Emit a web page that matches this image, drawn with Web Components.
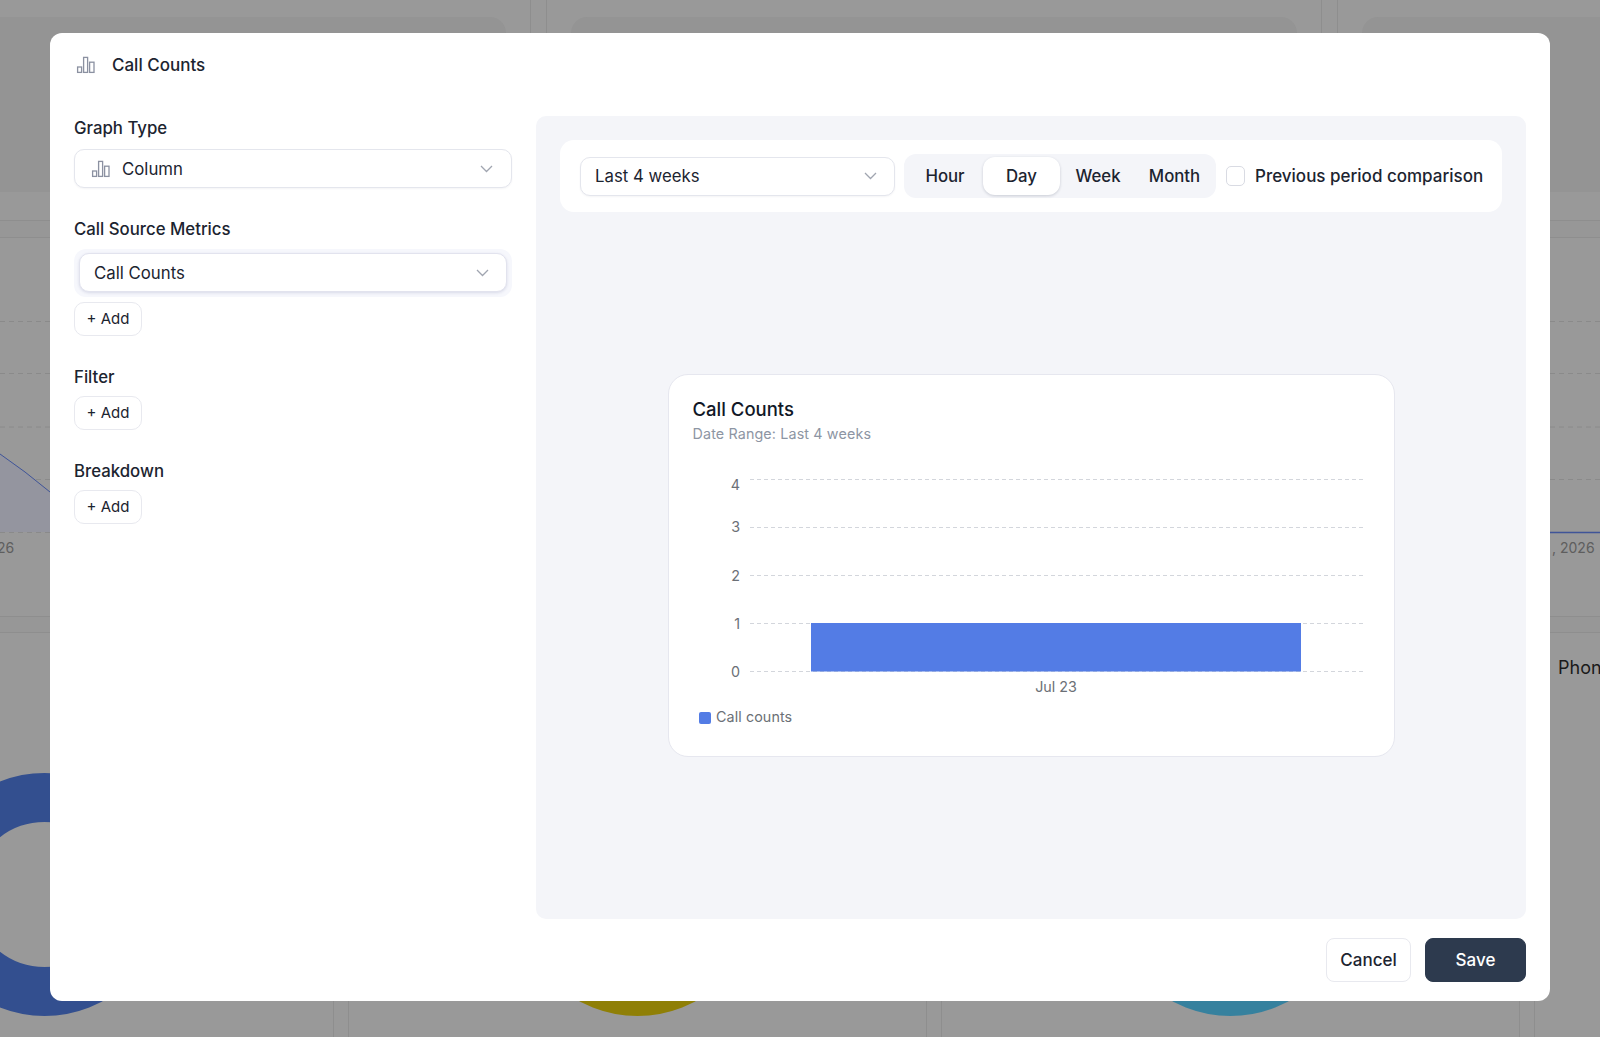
<!DOCTYPE html>
<html lang="en">
<head>
<meta charset="utf-8">
<title>Call Counts</title>
<style>
  html,body{margin:0;padding:0;height:100%;overflow:hidden;background:#999;font-family:Inter,"Liberation Sans",sans-serif;color:#1c2430}
  body{position:relative;width:1600px;height:1037px}
</style>
</head>
<body>
<bg-page></bg-page>
<app-modal>
  <span slot="title">Call Counts</span>
  <bar-icon slot="title-icon"></bar-icon>
  <config-panel slot="side"></config-panel>
  <preview-panel slot="main"></preview-panel>
  <action-button slot="footer">Cancel</action-button>
  <action-button slot="footer" primary>Save</action-button>
</app-modal>

<script>
function def(name, css, html, extra){
  const t=document.createElement('template');
  t.innerHTML='<style>'+css+'</style>'+html;
  customElements.define(name,class extends HTMLElement{
    constructor(){super();this.attachShadow({mode:'open'}).appendChild(t.content.cloneNode(true));if(extra)extra.call(this)}
  });
}

def('bar-icon',`:host{display:inline-flex;width:20px;height:20px;flex:none}svg{display:block}`,
`<svg width="20" height="20" viewBox="0 0 20 20" fill="none" stroke="#8b91a1" stroke-width="1.3"><rect x="1.6" y="12" width="4" height="5.4"/><rect x="7.6" y="2.4" width="4" height="15"/><rect x="13.6" y="7.2" width="4.4" height="10.2"/></svg>`);

def('chev-icon',`:host{display:inline-flex;flex:none}svg{display:block}`,
`<svg width="13" height="8" viewBox="0 0 13 8" fill="none" stroke="#a0a5b0" stroke-width="1.3"><path d="M1 1l5.5 5.5L12 1"/></svg>`);

def('x-select',`
  :host{display:flex;align-items:center;box-sizing:border-box;height:var(--h,39px);padding:0 var(--pr,18px) 0 var(--pl,16px);background:#fff;border:1px solid #e4e6ed;border-radius:10px;box-shadow:0 1px 2px rgba(30,40,70,.05);font:400 16.8px/24px Inter,sans-serif;color:#1c2430}
  .v{flex:1;display:flex;align-items:center;gap:var(--ig,11px)}
`,`<div class="v"><slot name="icon"></slot><slot></slot></div><chev-icon></chev-icon>`);

def('add-button',`
  :host{display:inline-flex;align-self:flex-start;align-items:center;justify-content:center;box-sizing:border-box;width:68px;height:34px;background:#fff;border:1px solid #e8e9ef;border-radius:10px;font:400 15px/20px Inter,sans-serif;color:#1c2430}
`,`+ Add`);

def('field-label',`:host{display:block;font:500 16.8px/24px Inter,sans-serif;color:#1c2430}`,`<slot></slot>`);

def('config-panel',`
  :host{display:flex;flex-direction:column}
  x-select.g{margin-top:9px}
  .ring{margin-top:8px;height:48px;box-sizing:border-box;padding:4px 5px 5px;background:#f6f7fc;border-radius:12px}
  .ring x-select{--h:39px;--pl:14px;--pr:17px;box-shadow:0 1px 3px rgba(40,50,110,.14);border-color:#e2e3ee}
  add-button{margin-top:5px}
  .s{margin-top:29px}
  .sa{margin-top:7px}
`,`
  <field-label>Graph Type</field-label>
  <x-select class="g"><bar-icon slot="icon"></bar-icon>Column</x-select>
  <field-label class="s">Call Source Metrics</field-label>
  <div class="ring"><x-select>Call Counts</x-select></div>
  <add-button></add-button>
  <field-label class="s">Filter</field-label>
  <add-button class="sa"></add-button>
  <field-label class="s">Breakdown</field-label>
  <add-button class="sa"></add-button>
`);

def('seg-control',`
  :host{display:flex;align-items:center;flex:none;box-sizing:border-box;height:44px;width:312px;padding:3px;background:#f4f5f9;border-radius:12px;font:500 16.8px/24px Inter,sans-serif;color:#1c2430}
  span{display:flex;align-items:center;justify-content:center;height:38px;box-sizing:border-box}
  .h{width:76px}
  .d{width:77px;background:#fff;border-radius:12px;box-shadow:0 1px 3px rgba(30,40,70,.2)}
  .w{width:76px}
  .m{width:77px}
`,`<span class="h">Hour</span><span class="d">Day</span><span class="w">Week</span><span class="m">Month</span>`);

def('check-field',`
  :host{display:flex;align-items:center;gap:10px;font:500 17px/24px Inter,sans-serif;color:#1c2430;white-space:nowrap}
  i{display:block;box-sizing:border-box;width:19px;height:20px;border:1.5px solid #d9dbe3;border-radius:5px;background:#fff}
`,`<i></i><slot></slot>`);

def('chart-card',`
  :host{display:block;box-sizing:border-box;width:727px;height:383px;background:#fff;border:1px solid #e6e7ef;border-radius:20px;padding:20px 24px 0;font-family:Inter,sans-serif}
  h3{margin:0;font:500 18.5px/28px Inter,sans-serif;color:#111827}
  p{margin:0;font:400 14.3px/22px Inter,sans-serif;color:#8d95a3;letter-spacing:.14px}
  svg{display:block;margin:24px 0 0 -24px}
  text{font:400 14.3px Inter,sans-serif;fill:#6b7076}
`,`
  <h3>Call Counts</h3>
  <p>Date Range: Last 4 weeks</p>
  <svg width="725" height="280" viewBox="0 0 725 280">
    <path d="M81 10.5H696M81 58.5H696M81 106.5H696M81 154.5H696M81 202.5H696" stroke="#d3d6dc" stroke-width="1" stroke-dasharray="4 3" fill="none"/>
    <rect x="142" y="154" width="490" height="48.5" fill="#537ce5"/>
    <g text-anchor="end">
      <text x="71" y="21">4</text>
      <text x="71" y="63">3</text>
      <text x="71" y="112">2</text>
      <text x="71" y="160">1</text>
      <text x="71" y="208">0</text>
    </g>
    <text x="387" y="223" text-anchor="middle">Jul 23</text>
    <rect x="30" y="243" width="12" height="12" rx="2" fill="#537ce5"/>
    <text x="47" y="253" style="letter-spacing:.1px">Call counts</text>
  </svg>
`);

def('preview-panel',`
  :host{display:flex;flex-direction:column;height:100%;box-sizing:border-box;padding:24px 24px 0;background:#f4f5f9;border-radius:10px}
  .bar{display:flex;align-items:center;box-sizing:border-box;height:72px;padding:0 18px 0 20px;background:#fff;border-radius:14px;flex:none}
  x-select{flex:none;width:315px;--h:39px;--pl:14px;--pr:17px;margin-right:9px}
  seg-control{margin-right:10px}
  .area{flex:1;display:flex;align-items:center;justify-content:center}
`,`
  <div class="bar">
    <x-select>Last 4 weeks</x-select>
    <seg-control></seg-control>
    <check-field>Previous period comparison</check-field>
  </div>
  <div class="area"><chart-card></chart-card></div>
`);

def('action-button',`
  :host{display:inline-flex;align-items:center;justify-content:center;box-sizing:border-box;height:44px;width:85px;background:#fff;border:1px solid #e8e9ef;border-radius:8px;font:500 17px/24px Inter,sans-serif;color:#1c2430}
  :host([primary]){width:101px;background:#2d3a4e;border-color:#2d3a4e;color:#fff}
`,`<slot></slot>`);

def('app-modal',`
  :host{position:absolute;inset:0;display:flex;justify-content:center;align-items:flex-start;padding-top:33px;box-sizing:border-box}
  .m{display:flex;flex-direction:column;box-sizing:border-box;width:1500px;height:968px;padding:0 24px;background:#fff;border-radius:12px}
  header{display:flex;align-items:center;gap:16px;height:83px;padding:0 0 19px 2px;box-sizing:border-box;flex:none;font:500 17px/24px Inter,sans-serif;color:#1c2430}
  .b{flex:1;min-height:0;display:grid;grid-template-columns:438px minmax(0,1fr);gap:24px}
  footer{flex:none;height:82px;display:flex;justify-content:flex-end;align-items:center;gap:14px}
`,`<div class="m">
  <header><slot name="title-icon"></slot><slot name="title"></slot></header>
  <div class="b"><div><slot name="side"></slot></div><div><slot name="main"></slot></div></div>
  <footer><slot name="footer"></slot></footer>
</div>`);

def('donut-shape',`
  :host{display:block;box-sizing:border-box;width:243px;height:243px;border-radius:50%;border:49px solid var(--c)}
`,``);

def('bg-page',`
  :host{position:absolute;inset:0;overflow:hidden;background:#999;color:#555}
  .g{margin-left:-245px;width:2400px}
  .r1{display:grid;grid-template-columns:776px 776px 776px;column-gap:15px;height:221px;box-sizing:border-box;border-bottom:1px solid #8e8e8e}
  .r1>div{border-left:1px solid #8e8e8e;border-right:1px solid #8e8e8e;padding:17px 24px 0;box-sizing:border-box}
  .r1 b{display:block;height:175px;background:#949494;border-radius:16px}
  .band{height:17px;box-sizing:border-box;background:#979797;border-bottom:1px solid #8e8e8e}
  .r2{height:379px;box-sizing:border-box;border-bottom:1px solid #8e8e8e;position:relative}
  .r2 svg{position:absolute;left:0;top:0}
  .l1,.l2{position:absolute;top:300px;font:400 14px/20px Inter,sans-serif;color:#5e5e5e}
  .l1{left:242px}
  .l2{left:1797px}
  .band2{height:16px;box-sizing:border-box;background:#979797;border-bottom:1px solid #8e8e8e}
  .r3{display:grid;grid-template-columns:579px 579px 579px 579px;column-gap:14px;height:404px}
  .r3>div{border-right:1px solid #8e8e8e;border-left:1px solid #8e8e8e;box-sizing:border-box;display:flex;flex-direction:column;align-items:center;padding-top:140px}
  .r3>div.p{align-items:flex-start;padding:21px 0 0 23px;font:400 18px/28px Inter,sans-serif;color:#1a1a1a}
`,`
  <div class="g">
    <div class="r1"><div><b></b></div><div><b></b></div><div><b></b></div></div>
    <div class="band"></div>
    <div class="r2">
      <svg width="2000" height="320" viewBox="0 0 2000 320" fill="none">
        <path d="M245 83.5H295M245 135.5H295M245 189H295M245 241.5H295M245 294.5H295" stroke="#8a8a8a" stroke-dasharray="5 4"/>
        <path d="M1795 83.5H1845M1795 135.5H1845M1795 189H1845M1795 241.5H1845M1795 294.5H1845" stroke="#8a8a8a" stroke-dasharray="5 4"/>
        <path d="M245 216Q270 233 295 254V294H245Z" fill="#94959f"/>
        <path d="M245 216Q270 233 295 254" stroke="#3f5498" stroke-width="1"/>
        <path d="M1795 294.5H1845" stroke="#3f5498" stroke-width="1.4"/>
      </svg>
      <span class="l1">26</span><span class="l2">, 2026</span>
    </div>
    <div class="band2"></div>
    <div class="r3">
      <div><donut-shape style="--c:#334f8f"></donut-shape></div>
      <div><donut-shape style="--c:#8f7f06"></donut-shape></div>
      <div><donut-shape style="--c:#36819e"></donut-shape></div>
      <div class="p">Phone</div>
    </div>
  </div>
`);
</script>
</body>
</html>
